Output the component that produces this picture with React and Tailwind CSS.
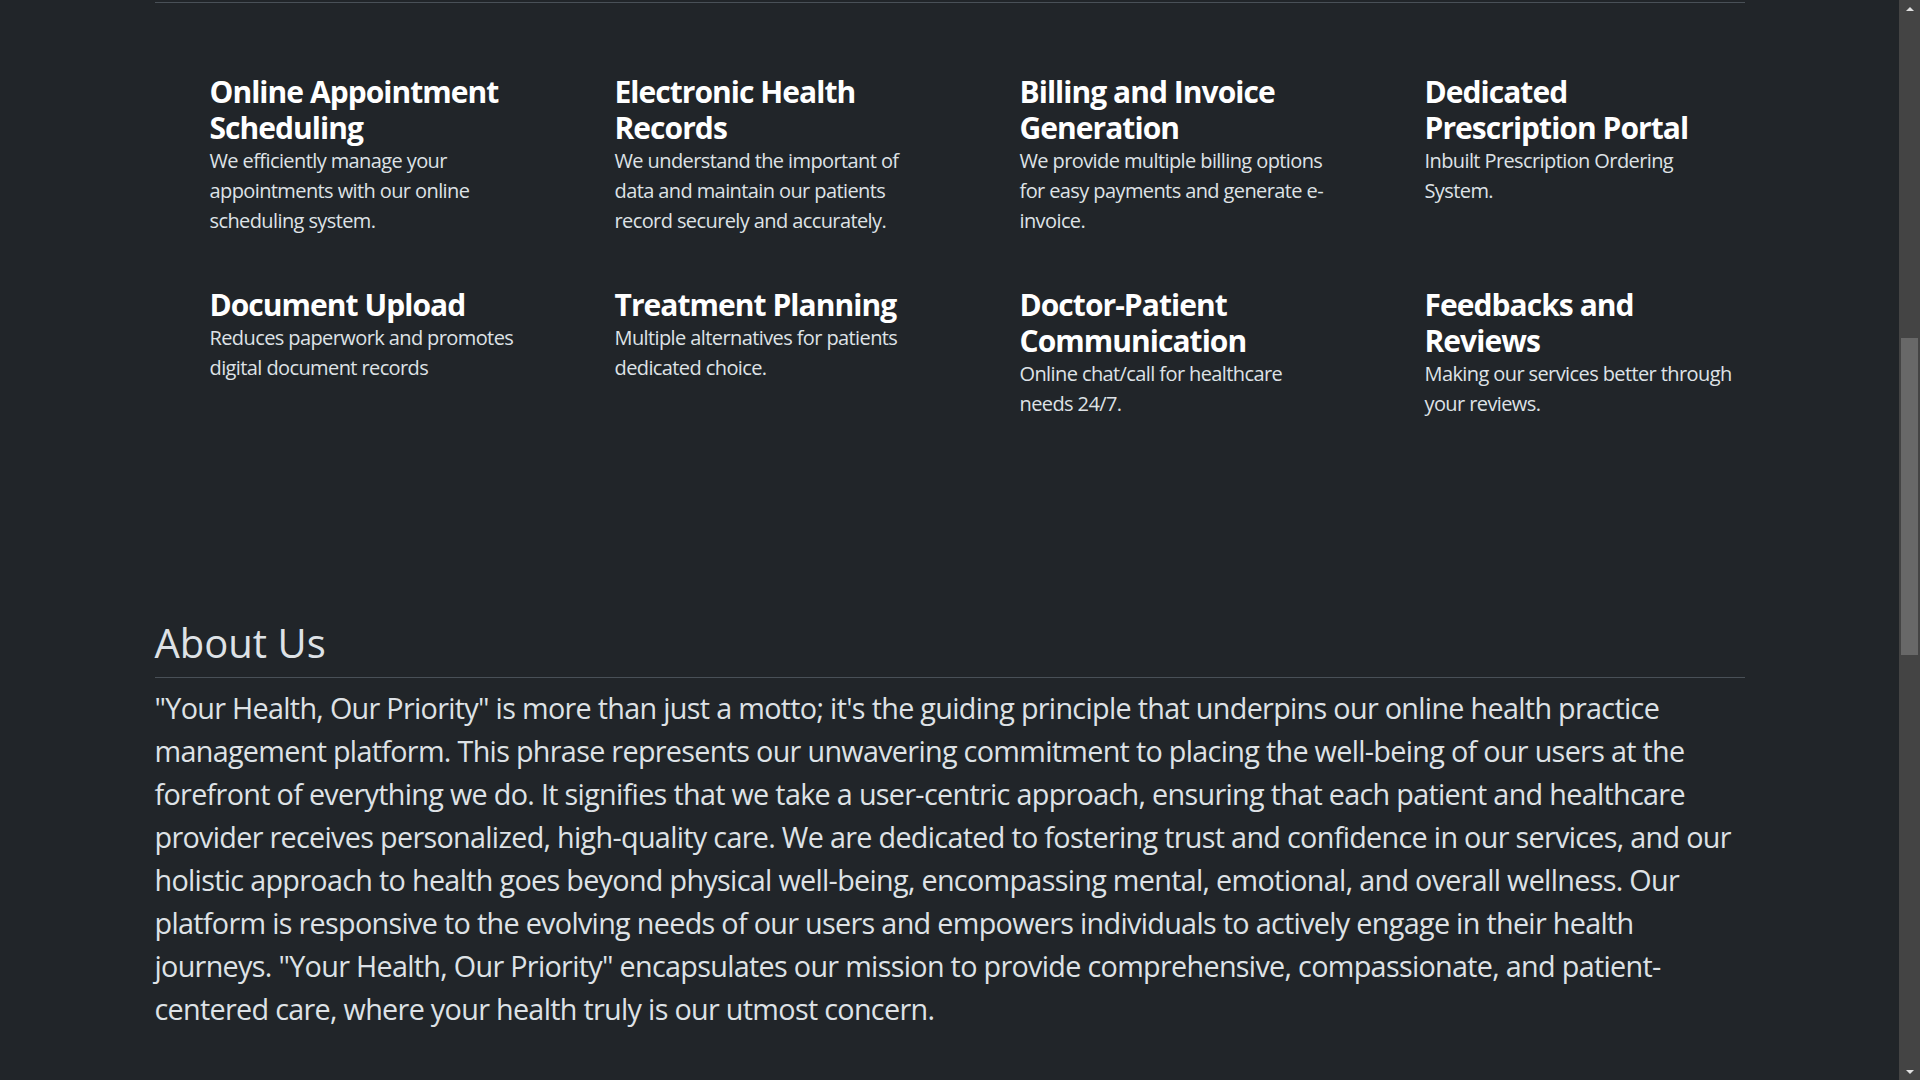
const features = [
  {
    title: ['Online Appointment', 'Scheduling'],
    text: ['We efficiently manage your', 'appointments with our online', 'scheduling system.'],
  },
  {
    title: ['Electronic Health', 'Records'],
    text: ['We understand the important of', 'data and maintain our patients', 'record securely and accurately.'],
  },
  {
    title: ['Billing and Invoice', 'Generation'],
    text: ['We provide multiple billing options', 'for easy payments and generate e-', 'invoice.'],
  },
  {
    title: ['Dedicated', 'Prescription Portal'],
    text: ['Inbuilt Prescription Ordering', 'System.'],
  },
  {
    title: ['Document Upload'],
    text: ['Reduces paperwork and promotes', 'digital document records'],
  },
  {
    title: ['Treatment Planning'],
    text: ['Multiple alternatives for patients', 'dedicated choice.'],
  },
  {
    title: ['Doctor-Patient', 'Communication'],
    text: ['Online chat/call for healthcare', 'needs 24/7.'],
  },
  {
    title: ['Feedbacks and', 'Reviews'],
    text: ['Making our services better through', 'your reviews.'],
  },
];

const about = [
  '"Your Health, Our Priority" is more than just a motto; it\'s the guiding principle that underpins our online health practice',
  'management platform. This phrase represents our unwavering commitment to placing the well-being of our users at the',
  'forefront of everything we do. It signifies that we take a user-centric approach, ensuring that each patient and healthcare',
  'provider receives personalized, high-quality care. We are dedicated to fostering trust and confidence in our services, and our',
  'holistic approach to health goes beyond physical well-being, encompassing mental, emotional, and overall wellness. Our',
  'platform is responsive to the evolving needs of our users and empowers individuals to actively engage in their health',
  'journeys. "Your Health, Our Priority" encapsulates our mission to provide comprehensive, compassionate, and patient-',
  'centered care, where your health truly is our utmost concern.',
];

function Feature({ title, text }) {
  return (
    <div className="flex items-start">
      {/* icon sprite never loaded, only its box is left */}
      <svg className="w-[35px] h-[35px] mr-[20px] shrink-0" aria-hidden="true" />
      <div>
        <h3 className="text-[30px] leading-[36px] font-bold text-white whitespace-pre tracking-[-0.032em]">
          {title.join('\n')}
        </h3>
        <p className="text-[20px] leading-[30px] text-[#dee2e6] whitespace-pre tracking-[-0.03em]">
          {text.join('\n')}
        </p>
      </div>
    </div>
  );
}

export default function App() {
  return (
    <div
      className="flex w-full h-[1080px] overflow-hidden bg-[#212529]"
      style={{ fontFamily: '"Open Sans", "Noto Sans", sans-serif' }}
    >
      <main className="flex-1">
        <div className="w-[1590px] mx-auto">
          <div className="mt-[2px] border-b border-[#495057]" />

          <section className="grid grid-cols-4 gap-x-[30px] gap-y-[51px] mt-[71px]">
            {features.map((f) => (
              <Feature key={f.title[0]} {...f} />
            ))}
          </section>

          <section className="mt-[200px]">
            <h2 className="text-[40px] leading-[48px] font-normal text-[#dee2e6] pb-[10px] border-b border-[#495057]">
              About Us
            </h2>
            <p className="mt-[8px] text-[28.75px] leading-[43px] text-[#dee2e6] whitespace-pre tracking-[-0.024em]">
              {about.join('\n')}
            </p>
          </section>
        </div>
      </main>

      <div className="w-[21px] bg-[#444444] flex flex-col items-center">
        <div className="h-[17px] flex items-center justify-center">
          <div className="w-0 h-0 border-l-[4px] border-r-[4px] border-b-[4px] border-l-transparent border-r-transparent border-b-[#e0e0e0]" />
        </div>
        <div className="mt-[321px] w-[17px] h-[317px] bg-[#686868]" />
        <div className="flex-1" />
        <div className="h-[17px] flex items-center justify-center">
          <div className="w-0 h-0 border-l-[4px] border-r-[4px] border-t-[4px] border-l-transparent border-r-transparent border-t-[#e0e0e0]" />
        </div>
      </div>
    </div>
  );
}
